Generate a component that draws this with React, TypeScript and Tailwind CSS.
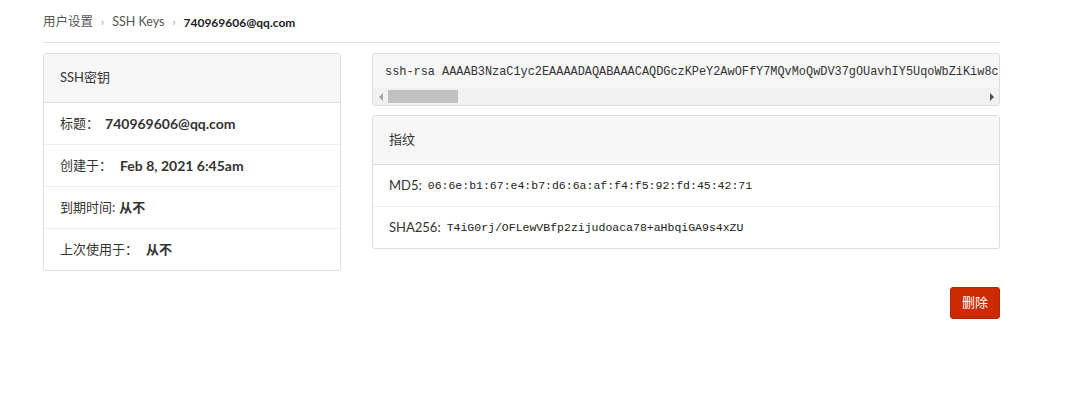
const sans = "font-['Lato','Noto_Sans_CJK_SC',sans-serif]"
const mono = "font-['Liberation_Mono','DejaVu_Sans_Mono',monospace]"

const keyText =
  "ssh-rsa AAAAB3NzaC1yc2EAAAADAQABAAACAQDGczKPeY2AwOFfY7MQvMoQwDV37gOUavhIY5UqoWbZiKiw8cTq3Lq0Wn8zXvR5oKJm2pHs9bYd7LcVfGtA1xNwE4uQiPz6rSe3M0lkDhJf8yBo2WvCn5tXa9gUqR7sLmZ1ePd4Kc3VbN6HyTiOw0jFxA8Yr2Gs5Ql9Mz7Ue1Dp4 740969606@qq.com"

function FakeScrollbar() {
  return (
    <div className="h-[17px] bg-[#f1f1f1] flex items-center">
      <div className="w-[15px] h-full flex items-center justify-center">
        <div className="w-0 h-0 border-y-[4px] border-y-transparent border-r-[4px] border-r-[#a3a3a3]" />
      </div>
      <div className="w-[70px] h-[13px] bg-[#c1c1c1]" />
      <div className="flex-1" />
      <div className="w-[15px] h-full flex items-center justify-center">
        <div className="w-0 h-0 border-y-[4px] border-y-transparent border-l-[4px] border-l-[#505050]" />
      </div>
    </div>
  )
}

export default function App() {
  return (
    <div className={`${sans} text-[13px] text-[#333] bg-white min-h-[402px]`}>
      <div className="w-[957px] ml-[43px]">
        <div className="h-[43px] flex items-center gap-[8px] border-b border-[#ddd] pt-[3px] text-[12.5px]">
          <span className="text-[#555]">用户设置</span>
          <span className="text-[#999] text-[11px]">›</span>
          <span className="text-[#555]">SSH Keys</span>
          <span className="text-[#999] text-[11px]">›</span>
          <span className="font-bold text-[#222] text-[12px]">740969606@qq.com</span>
        </div>

        <div className="flex gap-[31px] mt-[10px] items-start">
          <div className="w-[298px] shrink-0 border border-[#ddd] rounded-[3px]">
            <div className="h-[49px] bg-[#f7f7f7] border-b border-[#ddd] flex items-center px-4">
              SSH密钥
            </div>
            <div className="h-[42px] flex items-center px-4 border-b border-[#eee]">
              <span>标题：</span>
              <span className="font-bold ml-[6px] text-[14px]">740969606@qq.com</span>
            </div>
            <div className="h-[42px] flex items-center px-4 border-b border-[#eee]">
              <span>创建于：</span>
              <span className="font-bold ml-[8px] text-[14px]">Feb 8, 2021 6:45am</span>
            </div>
            <div className="h-[42px] flex items-center px-4 border-b border-[#eee]">
              <span>到期时间:</span>
              <span className="font-bold ml-[4px]">从不</span>
            </div>
            <div className="h-[41px] flex items-center px-4">
              <span>上次使用于：</span>
              <span className="font-bold ml-[8px]">从不</span>
            </div>
          </div>

          <div className="flex-1 min-w-0 flex flex-col gap-[9px]">
            <div className="bg-[#f7f7f7] border border-[#ddd] rounded-[3px] overflow-hidden">
              <pre
                className={`${mono} text-[11.9px] leading-[18px] text-[#333] pt-[9px] pb-[7px] px-[12px] overflow-hidden whitespace-pre m-0`}
              >
                {keyText}
              </pre>
              <FakeScrollbar />
            </div>

            <div className="border border-[#ddd] rounded-[3px]">
              <div className="h-[49px] bg-[#f7f7f7] border-b border-[#ddd] flex items-center px-4">
                指纹
              </div>
              <div className="h-[42px] flex items-center px-4 border-b border-[#eee]">
                <span>MD5:</span>
                <span className={`${mono} text-[11.5px] ml-[6px] text-[#222]`}>
                  06:6e:b1:67:e4:b7:d6:6a:af:f4:f5:92:fd:45:42:71
                </span>
              </div>
              <div className="h-[41px] flex items-center px-4">
                <span>SHA256:</span>
                <span className={`${mono} text-[11.5px] ml-[6px] text-[#222]`}>
                  T4iG0rj/OFLewVBfp2zijudoaca78+aHbqiGA9s4xZU
                </span>
              </div>
            </div>
          </div>
        </div>

        <div className="flex justify-end mt-[16px]">
          <button className="h-[32px] px-[11px] bg-[#cc2a00] border border-[#b52500] rounded-[3px] text-white text-[13px]">
            删除
          </button>
        </div>
      </div>
    </div>
  )
}
